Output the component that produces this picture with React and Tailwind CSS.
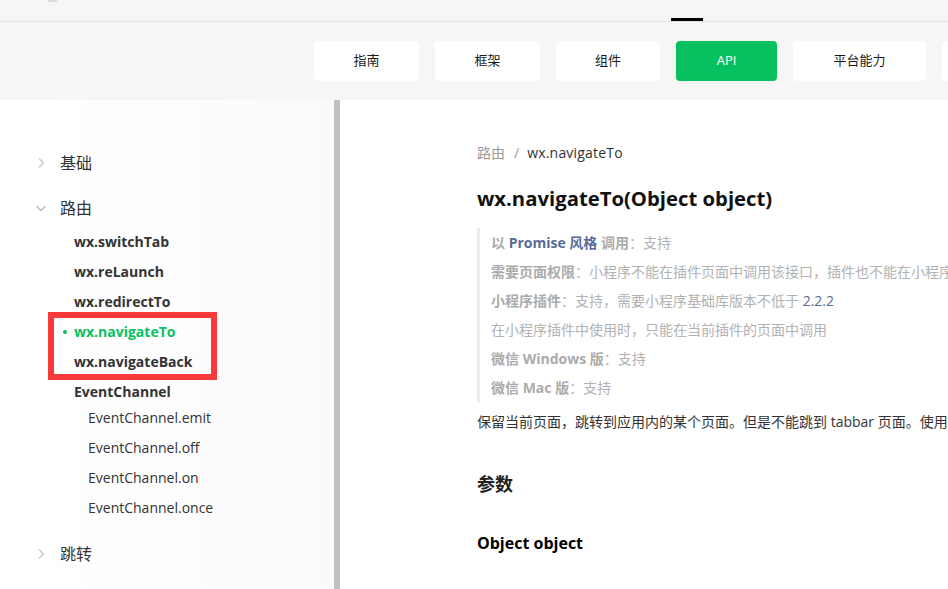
import React from 'react';

// onglets du haut
const tabs = [
    { label: '指南', w: 'w-[105px]' },
    { label: '框架', w: 'w-[105px]' },
    { label: '组件', w: 'w-[104px]' },
    { label: 'API', w: 'w-[101px]', active: true },
    { label: '平台能力', w: 'w-[133px]' },
    { label: '', w: 'w-[105px]' },
];

const routeItems = ['wx.switchTab', 'wx.reLaunch', 'wx.redirectTo', 'wx.navigateTo', 'wx.navigateBack'];
const channelItems = ['EventChannel.emit', 'EventChannel.off', 'EventChannel.on', 'EventChannel.once'];

const Chevron = ({ open }) => (
    <svg width="12" height="12" viewBox="0 0 12 12" className="shrink-0">
        {open ? (
            <path d="M1.5 4L6 8.5L10.5 4" fill="none" stroke="#b8b8b8" strokeWidth="1.3" />
        ) : (
            <path d="M4 1.5L8.5 6L4 10.5" fill="none" stroke="#c8c8c8" strokeWidth="1.3" />
        )}
    </svg>
);

const Section = ({ title, open }) => (
    <div className="flex items-center h-[30px] pl-[35px] gap-[13px] text-[16px] text-[#333]">
        <Chevron open={open} />
        <span>{title}</span>
    </div>
);

const Sidebar = () => (
    <div className="relative w-[334px] shrink-0 bg-gradient-to-r from-white from-[15%] to-[#fafafa] pt-[48px]">
        <Section title="基础" />
        <div className="mt-[15px]">
            <Section title="路由" open />
        </div>
        <div className="mt-[3px]">
            {routeItems.map((item) => {
                const active = item === 'wx.navigateTo';
                return (
                    <div
                        key={item}
                        className={`relative flex items-center h-[30px] pl-[74px] text-[14px] font-bold ${active ? 'text-[#07c160]' : 'text-[#333]'}`}
                    >
                        {active && <span className="absolute left-[63px] top-[14px] w-[4px] h-[4px] rounded-full bg-[#07c160]" />}
                        {item}
                    </div>
                );
            })}
            <div className="flex items-center h-[30px] pl-[74px] text-[14px] font-bold text-[#333]">EventChannel</div>
            <div className="-mt-[4px]">
                {channelItems.map((item) => (
                    <div key={item} className="flex items-center h-[30px] pl-[88px] text-[14px] text-[#333]">
                        {item}
                    </div>
                ))}
            </div>
        </div>
        <div className="mt-[17px]">
            <Section title="跳转" />
        </div>
        {/* cadre d'annotation rouge */}
        <div className="absolute left-[48px] top-[212px] w-[169px] h-[68px] border-[6px] border-[#f93a3a]" />
    </div>
);

const Gray = ({ children }) => <span className="font-bold text-[#ababab]">{children}</span>;
const Link = ({ children }) => <span className="text-[#576b95]">{children}</span>;

const Content = () => (
    <div className="flex-1 min-w-0 overflow-hidden bg-white pl-[137px] pt-[42px]">
        <div className="flex items-center h-[20px] text-[14px] whitespace-nowrap">
            <span className="text-[#9a9a9a]">路由</span>
            <span className="text-[#9a9a9a] ml-[9px] mr-[8px]">/</span>
            <span className="text-[#333] tracking-[0.2px]">wx.navigateTo</span>
        </div>
        <h1 className="mt-[22px] h-[28px] leading-[28px] text-[20.3px] font-bold text-[#111] whitespace-nowrap">
            wx.navigateTo(Object object)
        </h1>
        <div className="mt-[16px] border-l-[3px] border-[#ececec] pl-[11px] text-[14px] leading-[29px] text-[#b2b2b2] whitespace-nowrap">
            <div>
                <Gray>以 </Gray><span className="font-bold text-[#576b95]">Promise 风格</span><Gray> 调用</Gray>：支持
            </div>
            <div>
                <Gray>需要页面权限</Gray>：小程序不能在插件页面中调用该接口，插件也不能在小程序页面中调用该接口
            </div>
            <div>
                <Gray>小程序插件</Gray>：支持，需要小程序基础库版本不低于 <Link>2.2.2</Link>
            </div>
            <div>在小程序插件中使用时，只能在当前插件的页面中调用</div>
            <div>
                <Gray>微信 Windows 版</Gray>：支持
            </div>
            <div>
                <Gray>微信 Mac 版</Gray>：支持
            </div>
        </div>
        <p className="mt-[6px] leading-[28px] text-[14px] text-[#333] whitespace-nowrap">
            保留当前页面，跳转到应用内的某个页面。但是不能跳到 tabbar 页面。使用 wx.navigateBack 可以返回到原页面。
        </p>
        <h2 className="mt-[35px] leading-[26px] text-[18px] font-bold text-[#222]">参数</h2>
        <h3 className="mt-[34px] leading-[24px] text-[16px] font-bold text-black">Object object</h3>
    </div>
);

export default function App() {
    return (
        <div
            className="w-[948px] h-[589px] overflow-hidden flex flex-col bg-white"
            style={{ fontFamily: '"Open Sans", "Noto Sans CJK SC", sans-serif' }}
        >
            {/* barre du haut */}
            <div className="relative h-[22px] shrink-0 bg-[#f6f6f6] border-b border-[#e3e3e3]">
                <div className="absolute left-[48px] top-0 w-[9px] h-[2px] bg-[#dcdcdc]" />
                <div className="absolute left-[671px] bottom-0 w-[32px] h-[3px] bg-black" />
            </div>
            {/* onglets */}
            <div className="h-[78px] shrink-0 bg-[#f6f6f6] flex items-center gap-4 pl-[314px] overflow-hidden">
                {tabs.map((t, i) => (
                    <div
                        key={i}
                        className={`${t.w} h-[40px] shrink-0 rounded-[4px] flex items-center justify-center text-[13px] ${t.active ? 'bg-[#07c160] text-white' : 'bg-white text-[#1a1a1a]'}`}
                    >
                        {t.label}
                    </div>
                ))}
            </div>
            <div className="flex flex-1 min-h-0">
                <Sidebar />
                <div className="w-[6px] shrink-0 bg-[#c1c1c1]" />
                <Content />
            </div>
        </div>
    );
}
